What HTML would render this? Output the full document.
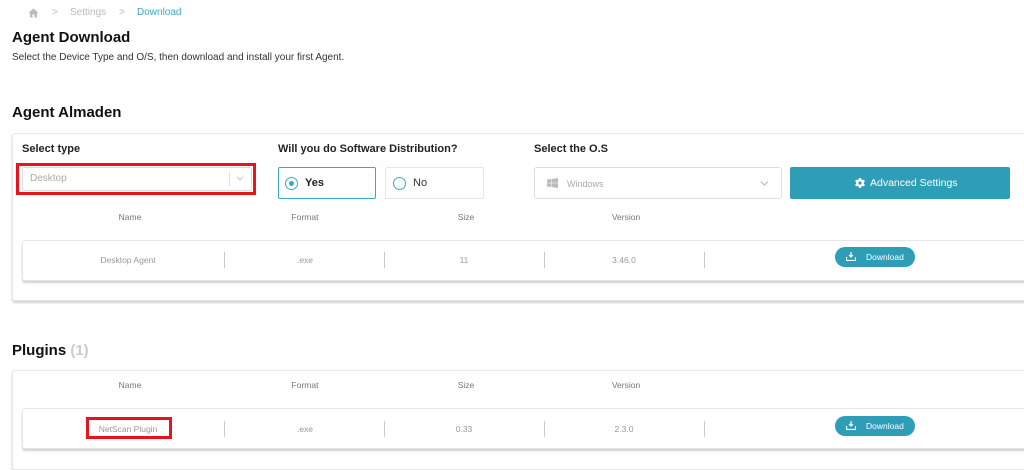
<!DOCTYPE html>
<html><head><meta charset="utf-8"><style>
*{margin:0;padding:0;box-sizing:border-box}
body{width:1024px;height:456px;overflow:hidden;background:#fff;font-family:"Liberation Sans",sans-serif;position:relative;color:#111}
.a{position:absolute}
.card{position:absolute;background:#fff;border:1px solid #e6e6e6;box-shadow:0 2px 2px rgba(0,0,0,.18);border-radius:3px}
.hd{position:absolute;font-size:8.5px;color:#777;transform:translateX(-50%)}
.cell{position:absolute;font-size:8.5px;color:#999;transform:translateX(-50%)}
.sep{position:absolute;width:1px;height:16px;background:#ccc}
.dl{position:absolute;width:80px;height:20px;border-radius:10px;background:#2e9eb8;color:#fff;font-size:8.5px;line-height:20px}
.dl svg{position:absolute;left:11px;top:5px}
.dl span{position:absolute;left:31px}
.lbl{position:absolute;font-size:11px;font-weight:bold;color:#222}
</style></head><body>
<svg class="a" style="left:28px;top:8px" width="11" height="10" viewBox="0 0 11 10"><path d="M5.5 0.5L0.5 5h1.5v4.5h2.5V6.5h2v3h2.5V5h1.5z" fill="#bbb"/></svg>
<div class="a" style="left:52px;top:7px;font-size:10px;color:#bbb">&gt;</div>
<div class="a" style="left:70px;top:7px;font-size:10px;color:#bbb">Settings</div>
<div class="a" style="left:119px;top:7px;font-size:10px;color:#bbb">&gt;</div>
<div class="a" style="left:137px;top:7px;font-size:10px;color:#3aa8c4">Download</div>
<div class="a" style="left:12px;top:29px;font-size:15px;font-weight:bold">Agent Download</div>
<div class="a" style="left:12px;top:52px;font-size:10px;color:#333">Select the Device Type and O/S, then download and install your first Agent.</div>
<div class="a" style="left:12px;top:104px;font-size:15px;font-weight:bold">Agent Almaden</div>

<div class="card" style="left:12px;top:133px;width:1030px;height:168px"></div>
<div class="lbl" style="left:22px;top:143px">Select type</div>
<div class="a" style="left:16px;top:163px;width:240px;height:32px;border:3px solid #e8141c"></div>
<div class="a" style="left:22px;top:167px;width:230px;height:24px;border:1px solid #ddd;border-radius:2px"></div>
<div class="a" style="left:30px;top:173px;font-size:10px;color:#aaa">Desktop</div>
<div class="a" style="left:229px;top:172px;width:1px;height:14px;background:#ddd"></div>
<svg class="a" style="left:236px;top:176px" width="8" height="5" viewBox="0 0 8 5"><path d="M1 1l3 3 3-3" stroke="#ccc" stroke-width="1.2" fill="none"/></svg>

<div class="lbl" style="left:278px;top:143px">Will you do Software Distribution?</div>
<div class="a" style="left:278px;top:167px;width:98px;height:32px;border:1px solid #3aa8c4;border-radius:2px"></div>
<div class="a" style="left:285px;top:177px;width:13px;height:13px;border:1.5px solid #3aa8c4;border-radius:50%"></div>
<div class="a" style="left:289px;top:181px;width:5px;height:5px;background:#3aa8c4;border-radius:50%"></div>
<div class="a" style="left:305px;top:177px;font-size:11px;font-weight:bold;color:#222">Yes</div>
<div class="a" style="left:385px;top:167px;width:99px;height:32px;border:1px solid #e6e6e6;border-radius:2px"></div>
<div class="a" style="left:393px;top:177px;width:13px;height:13px;border:1.5px solid #3aa8c4;border-radius:50%"></div>
<div class="a" style="left:413px;top:177px;font-size:11px;color:#333">No</div>

<div class="lbl" style="left:534px;top:143px">Select the O.S</div>
<div class="a" style="left:534px;top:167px;width:248px;height:32px;border:1px solid #ddd;border-radius:3px"></div>
<svg class="a" style="left:547px;top:178px" width="11" height="10" viewBox="0 0 11 10"><path d="M0 1.5L4.5 1v3.7H0zM5 .9L11 0v4.7H5zM0 5.2h4.5V9L0 8.5zM5 5.2h6V10L5 9.1z" fill="#bbb"/></svg>
<div class="a" style="left:567px;top:179px;font-size:9px;color:#aaa">Windows</div>
<svg class="a" style="left:760px;top:181px" width="9" height="5" viewBox="0 0 9 5"><path d="M1 .5l3.5 3.5 3.5-3.5" stroke="#bbb" stroke-width="1.2" fill="none"/></svg>
<div class="a" style="left:790px;top:167px;width:220px;height:32px;background:#2e9eb8;border-radius:2px"></div>
<svg class="a" style="left:855px;top:178px" width="10" height="10" viewBox="0 0 10 10"><path d="M4 0h2l.3 1.4 1.2.7 1.4-.5 1 1.7-1.1 1v1.4l1.1 1-1 1.7-1.4-.5-1.2.7L6 10H4l-.3-1.4-1.2-.7-1.4.5-1-1.7 1.1-1V4.3L.1 3.3l1-1.7 1.4.5 1.2-.7z" fill="#fff"/><circle cx="5" cy="5" r="1.6" fill="#2e9eb8"/></svg>
<div class="a" style="left:870px;top:177px;font-size:10.5px;color:#fff">Advanced Settings</div>

<div class="hd" style="left:130px;top:212px">Name</div>
<div class="hd" style="left:305px;top:212px">Format</div>
<div class="hd" style="left:466px;top:212px">Size</div>
<div class="hd" style="left:626px;top:212px">Version</div>
<div class="card" style="left:22px;top:240px;width:1020px;height:41px"></div>
<div class="cell" style="left:128px;top:255px">Desktop Agent</div>
<div class="cell" style="left:305px;top:255px">.exe</div>
<div class="cell" style="left:464px;top:255px">11</div>
<div class="cell" style="left:624px;top:255px">3.46.0</div>
<div class="sep" style="left:224px;top:252px"></div><div class="sep" style="left:384px;top:252px"></div><div class="sep" style="left:544px;top:252px"></div><div class="sep" style="left:704px;top:252px"></div>
<div class="dl" style="left:835px;top:247px"><svg width="10" height="9" viewBox="0 0 10 9"><path d="M5 0v5M3 3l2 2 2-2M.5 5v3.5h9V5" stroke="#fff" stroke-width="1.2" fill="none"/></svg><span>Download</span></div>

<div class="a" style="left:12px;top:342px;font-size:15px;font-weight:bold">Plugins <span style="color:#ccc">(1)</span></div>
<div class="card" style="left:12px;top:370px;width:1030px;height:100px"></div>
<div class="hd" style="left:130px;top:380px">Name</div>
<div class="hd" style="left:305px;top:380px">Format</div>
<div class="hd" style="left:466px;top:380px">Size</div>
<div class="hd" style="left:626px;top:380px">Version</div>
<div class="card" style="left:22px;top:408px;width:1020px;height:41px"></div>
<div class="a" style="left:86px;top:417px;width:86px;height:22px;border:3px solid #e8141c"></div>
<div class="cell" style="left:128px;top:424px">NetScan Plugin</div>
<div class="cell" style="left:305px;top:424px">.exe</div>
<div class="cell" style="left:464px;top:424px">0.33</div>
<div class="cell" style="left:624px;top:424px">2.3.0</div>
<div class="sep" style="left:224px;top:421px"></div><div class="sep" style="left:384px;top:421px"></div><div class="sep" style="left:544px;top:421px"></div><div class="sep" style="left:704px;top:421px"></div>
<div class="dl" style="left:835px;top:416px"><svg width="10" height="9" viewBox="0 0 10 9"><path d="M5 0v5M3 3l2 2 2-2M.5 5v3.5h9V5" stroke="#fff" stroke-width="1.2" fill="none"/></svg><span>Download</span></div>
</body></html>
